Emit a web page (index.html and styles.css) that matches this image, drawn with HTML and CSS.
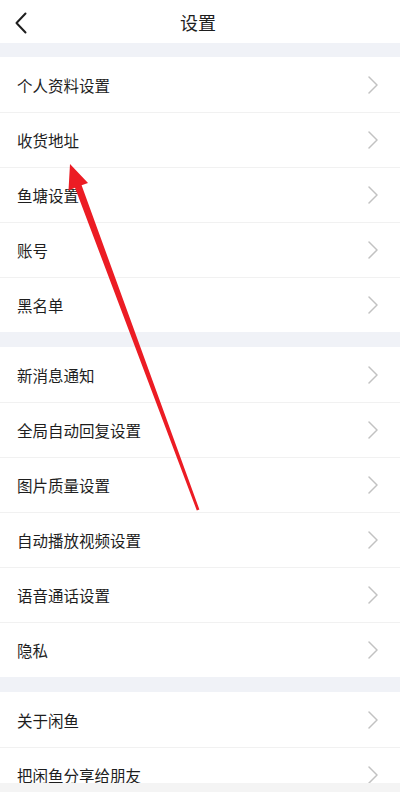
FILE: index.html
```html
<!DOCTYPE html>
<html lang="zh-CN">
<head>
<meta charset="utf-8">
<title>设置</title>
<link rel="stylesheet" href="styles.css">
</head>
<body>
<div class="screen">
  <div class="scroll">
    <header class="header">
      <svg class="back" width="14" height="22" viewBox="0 0 14 22"><path d="M11.5 1.5 L2.5 11 L11.5 20.5" fill="none" stroke="#1e1e1e" stroke-width="2" stroke-linecap="round" stroke-linejoin="round"/></svg>
      <h1 class="title">设置</h1>
    </header>
    <div class="gap"></div>
    <section class="group">
      <div class="row"><span>个人资料设置</span><svg class="chev" viewBox="0 0 10 18"><path d="M1 1 L9 9 L1 17"/></svg></div>
      <div class="row"><span>收货地址</span><svg class="chev" viewBox="0 0 10 18"><path d="M1 1 L9 9 L1 17"/></svg></div>
      <div class="row"><span>鱼塘设置</span><svg class="chev" viewBox="0 0 10 18"><path d="M1 1 L9 9 L1 17"/></svg></div>
      <div class="row"><span>账号</span><svg class="chev" viewBox="0 0 10 18"><path d="M1 1 L9 9 L1 17"/></svg></div>
      <div class="row"><span>黑名单</span><svg class="chev" viewBox="0 0 10 18"><path d="M1 1 L9 9 L1 17"/></svg></div>
    </section>
    <div class="gap"></div>
    <section class="group">
      <div class="row"><span>新消息通知</span><svg class="chev" viewBox="0 0 10 18"><path d="M1 1 L9 9 L1 17"/></svg></div>
      <div class="row"><span>全局自动回复设置</span><svg class="chev" viewBox="0 0 10 18"><path d="M1 1 L9 9 L1 17"/></svg></div>
      <div class="row"><span>图片质量设置</span><svg class="chev" viewBox="0 0 10 18"><path d="M1 1 L9 9 L1 17"/></svg></div>
      <div class="row"><span>自动播放视频设置</span><svg class="chev" viewBox="0 0 10 18"><path d="M1 1 L9 9 L1 17"/></svg></div>
      <div class="row"><span>语音通话设置</span><svg class="chev" viewBox="0 0 10 18"><path d="M1 1 L9 9 L1 17"/></svg></div>
      <div class="row"><span>隐私</span><svg class="chev" viewBox="0 0 10 18"><path d="M1 1 L9 9 L1 17"/></svg></div>
    </section>
    <div class="gap"></div>
    <section class="group">
      <div class="row"><span>关于闲鱼</span><svg class="chev" viewBox="0 0 10 18"><path d="M1 1 L9 9 L1 17"/></svg></div>
      <div class="row"><span>把闲鱼分享给朋友</span><svg class="chev" viewBox="0 0 10 18"><path d="M1 1 L9 9 L1 17"/></svg></div>
    </section>
  </div>
  <div class="bottom"></div>
  <svg class="arrow" width="400" height="792" viewBox="0 0 400 792">
    <polygon points="70,164 88,183 81.6,185.3 199.4,509.5 196.8,510.5 75,187.7 68.5,190.5" fill="#ec1c24"/>
  </svg>
</div>
</body>
</html>
```
FILE: styles.css
```css
* { box-sizing: border-box; }
html, body { margin: 0; padding: 0; background: #fff; }
body {
  font-family: "Noto Sans CJK SC", "Noto Sans", sans-serif;
  color: #222;
}
.screen {
  position: relative;
  width: 400px;
  height: 792px;
  display: flex;
  flex-direction: column;
  overflow: hidden;
}
.scroll {
  flex: 1;
  overflow: hidden;
  background: #fff;
}
.bottom {
  height: 9px;
  background: #f4f4f4;
}
.header {
  height: 43px;
  display: flex;
  align-items: center;
  justify-content: center;
  position: relative;
}
.back {
  position: absolute;
  left: 14px;
  top: 12px;
}
.title {
  margin: 0 0 0 -4px;
  font-size: 18px;
  font-weight: 400;
  color: #1e1e1e;
  line-height: 1;
}
.gap {
  height: 14px;
  background: #f0f2f7;
}
.group + .gap { height: 15px; }
.row {
  height: 55px;
  display: flex;
  align-items: center;
  justify-content: space-between;
  padding: 0 22px 0 17px;
  font-size: 15.5px;
  color: #1e1e1e;
}
.row + .row { border-top: 1px solid #f1f1f1; }
.chev {
  width: 10px;
  height: 18px;
  fill: none;
  stroke: #c2c2c2;
  stroke-width: 1.5;
  stroke-linecap: round;
  stroke-linejoin: round;
}
.arrow {
  position: absolute;
  left: 0;
  top: 0;
  pointer-events: none;
}
```
